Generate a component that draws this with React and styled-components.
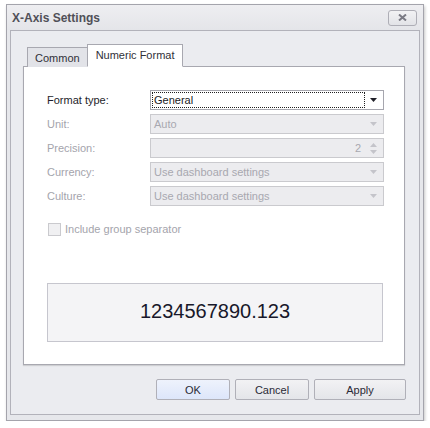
import styled, { createGlobalStyle, css } from "styled-components";

const GlobalStyle = createGlobalStyle`
    html, body {
        margin: 0;
        padding: 0;
        background: #ffffff;
    }
    body {
        font-family: "Liberation Sans", Arial, sans-serif;
        font-size: 11px;
        color: #202020;
    }
`;

const rows = [
    { label: "Format type:", value: "General", active: true },
    { label: "Unit:", value: "Auto" },
    { label: "Precision:", value: "2", spin: true },
    { label: "Currency:", value: "Use dashboard settings" },
    { label: "Culture:", value: "Use dashboard settings" },
];

function Arrow({ disabled }) {
    return (
        <svg width="7" height="4" viewBox="0 0 7 4">
            <path d="M0 0 H7 L3.5 4 Z" fill={disabled ? "#c4c4ca" : "#202028"} />
        </svg>
    );
}

function Spinner() {
    return (
        <SpinBox>
            <svg width="7" height="4" viewBox="0 0 7 4">
                <path d="M0 4 H7 L3.5 0 Z" fill="#c4c4ca" />
            </svg>
            <svg width="7" height="4" viewBox="0 0 7 4">
                <path d="M0 0 H7 L3.5 4 Z" fill="#c4c4ca" />
            </svg>
        </SpinBox>
    );
}

export default function App() {
    return (
        <>
            <GlobalStyle />
            <Page>
                <Window>
                    <TitleBar>
                        <Title>X-Axis Settings</Title>
                        <CloseButton>
                            <svg width="9" height="7" viewBox="0 0 9 7">
                                <path d="M1 0.5 L8 6.5 M8 0.5 L1 6.5" stroke="#7a7a84" strokeWidth="2" />
                            </svg>
                        </CloseButton>
                    </TitleBar>
                    <Client>
                        <TabStrip>
                            <Tab>Common</Tab>
                            <Tab $active>Numeric Format</Tab>
                        </TabStrip>
                        <Panel>
                            <Form>
                                {rows.map((r) => (
                                    <Row key={r.label}>
                                        <Label $disabled={!r.active}>{r.label}</Label>
                                        <Field $active={r.active}>
                                            {r.active ? <Focus>{r.value}</Focus> : <Value $right={r.spin}>{r.value}</Value>}
                                            {r.spin ? <Spinner /> : <ArrowBox><Arrow disabled={!r.active} /></ArrowBox>}
                                        </Field>
                                    </Row>
                                ))}
                            </Form>
                            <CheckRow>
                                <CheckBox />
                                <CheckText>Include group separator</CheckText>
                            </CheckRow>
                            <Preview>1234567890.123</Preview>
                        </Panel>
                        <Footer>
                            <Button $primary>OK</Button>
                            <Button>Cancel</Button>
                            <Button $wide>Apply</Button>
                        </Footer>
                    </Client>
                </Window>
            </Page>
        </>
    );
}

const Page = styled.div`
    padding: 4px 0 0 6px;
`;

const Window = styled.div`
    width: 416px;
    height: 415px;
    border: 1px solid #a4a4ac;
    background: #e6e7eb;
    box-shadow: 1px 2px 3px rgba(0, 0, 0, 0.22);
    display: flex;
    flex-direction: column;
`;

const TitleBar = styled.div`
    height: 25px;
    display: flex;
    align-items: center;
    justify-content: space-between;
    padding: 0 6px 0 5px;
    background: linear-gradient(#eeeef1, #e4e5e9);
`;

const Title = styled.div`
    font-family: "Liberation Sans", Arial, sans-serif;
    font-weight: bold;
    font-size: 12px;
    color: #505058;
`;

const CloseButton = styled.div`
    width: 27px;
    height: 14px;
    border: 1px solid #aeaeb6;
    border-radius: 3px;
    background: linear-gradient(#f2f2f4, #e2e3e7);
    display: flex;
    align-items: center;
    justify-content: center;
`;

const Client = styled.div`
    flex: 1;
    margin: 0 3px 5px 3px;
    border: 1px solid #b2b2ba;
    background: #ebecf0;
    padding: 13px 12px 0 12px;
    display: flex;
    flex-direction: column;
`;

const TabStrip = styled.div`
    display: flex;
    align-items: flex-end;
    padding-left: 4px;
    height: 23px;
    position: relative;
    z-index: 1;
    margin-bottom: -1px;
`;

const Tab = styled.div`
    border: 1px solid #a8a8b0;
    display: flex;
    color: #303038;
    box-sizing: border-box;
    ${(p) =>
        p.$active
            ? css`
                  height: 23px;
                  padding: 4px 8px 0 8px;
                  background: #ffffff;
                  border-bottom-color: #ffffff;
                  margin-left: -1px;
              `
            : css`
                  height: 20px;
                  padding: 4px 7px 0 7px;
                  background: #e2e3e8;
                  border-bottom: none;
              `}
`;

const Panel = styled.div`
    width: 382px;
    height: 299px;
    background: #ffffff;
    border: 1px solid #a8a8b0;
    box-shadow: 0 1px 1px rgba(0, 0, 0, 0.12);
    padding: 23px 0 0 23px;
    box-sizing: border-box;
    display: flex;
    flex-direction: column;
`;

const Form = styled.div`
    display: flex;
    flex-direction: column;
    gap: 4px;
`;

const Row = styled.div`
    display: flex;
    align-items: center;
    height: 20px;
`;

const Label = styled.div`
    width: 103px;
    color: ${(p) => (p.$disabled ? "#a4a4ac" : "#1e1e2a")};
`;

const Field = styled.div`
    width: 234px;
    height: 20px;
    box-sizing: border-box;
    border: 1px solid ${(p) => (p.$active ? "#a6a6ae" : "#cacace")};
    background: ${(p) => (p.$active ? "#ffffff" : "#ececef")};
    display: flex;
    align-items: center;
    padding: 1px;
`;

const Focus = styled.div`
    flex: 1;
    height: 16px;
    border: 1px dotted #202020;
    box-sizing: border-box;
    display: flex;
    align-items: center;
    padding-left: 1px;
    color: #1a1a24;
`;

const Value = styled.div`
    flex: 1;
    color: #a8a8b0;
    text-align: ${(p) => (p.$right ? "right" : "left")};
    padding: ${(p) => (p.$right ? "0 4px 0 0" : "0 0 0 2px")};
`;

const ArrowBox = styled.div`
    width: 17px;
    display: flex;
    align-items: center;
    justify-content: center;
`;

const SpinBox = styled.div`
    width: 17px;
    display: flex;
    flex-direction: column;
    align-items: center;
    gap: 3px;
`;

const CheckRow = styled.div`
    display: flex;
    align-items: center;
    gap: 4px;
    margin-top: 15px;
    padding-left: 1px;
    height: 16px;
`;

const CheckBox = styled.div`
    width: 13px;
    height: 13px;
    box-sizing: border-box;
    border: 1px solid #cacace;
    background: #f0f0f2;
`;

const CheckText = styled.div`
    color: #a4a4ac;
`;

const Preview = styled.div`
    margin-top: 46px;
    width: 336px;
    height: 59px;
    box-sizing: border-box;
    background: #f4f4f6;
    border: 1px solid #c6c6ce;
    display: flex;
    align-items: center;
    justify-content: center;
    font-size: 20px;
    color: #18182a;
    padding-bottom: 2px;
`;

const Footer = styled.div`
    display: flex;
    justify-content: flex-end;
    gap: 5px;
    margin-top: 14px;
    padding-right: 1px;
`;

const Button = styled.div`
    width: ${(p) => (p.$wide ? "92px" : "74px")};
    height: 21px;
    box-sizing: border-box;
    border: 1px solid #b0b0b8;
    border-radius: 2px;
    display: flex;
    align-items: center;
    justify-content: center;
    color: #2a2a36;
    background: ${(p) =>
        p.$primary
            ? "linear-gradient(#eef2fc, #dde6fa)"
            : "linear-gradient(#f2f2f4, #e4e5e9)"};
`;
